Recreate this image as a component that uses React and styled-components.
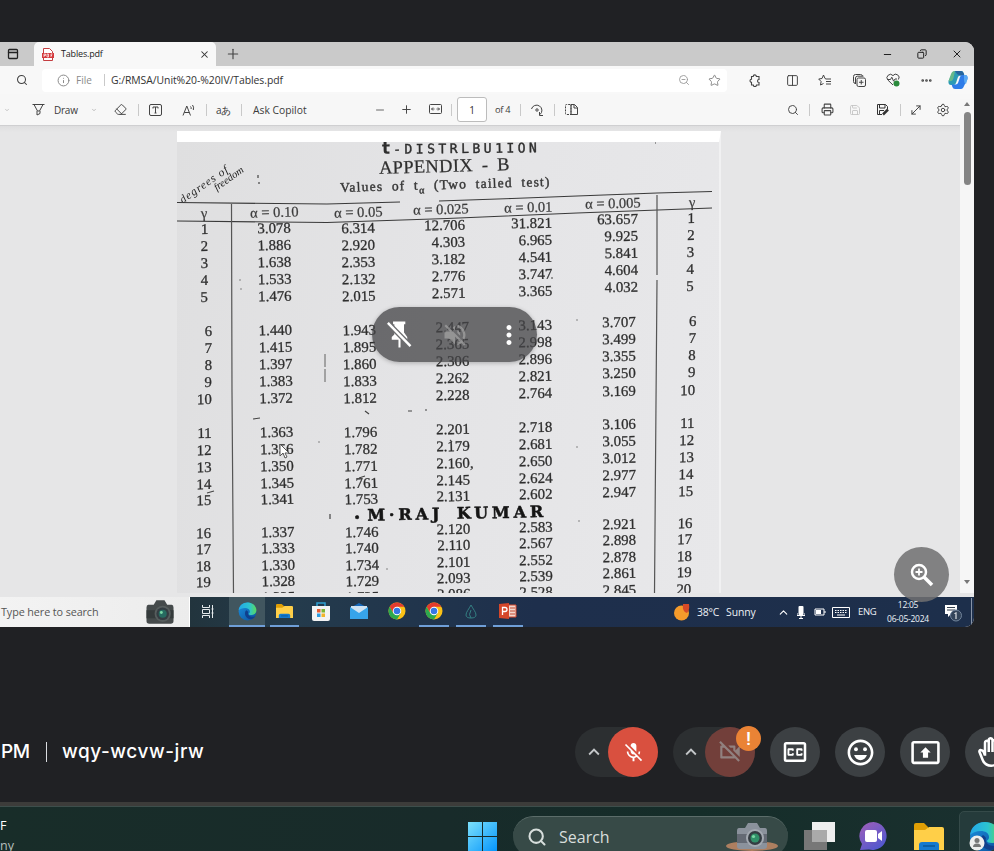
import React from "react";
import styled, { createGlobalStyle, css } from "styled-components";
import {
  Search, Star, Columns2, Printer, Save,
  MoveDiagonal, Settings, Eraser, Info, ZoomOut, Ellipsis, Minus, Plus,
  X, Copy, ChevronUp, ChevronDown, PanelTop,
} from "lucide-react";
import {
  MdMicOff, MdOutlineVideocamOff, MdOutlineClosedCaptionOff, MdOutlineEmojiEmotions,
  MdOutlinePresentToAll, MdOutlineBackHand, MdMoreVert, MdVolumeOff, MdKeyboardArrowUp,
} from "react-icons/md";

const Global = createGlobalStyle`
  * { box-sizing: border-box; }
  body { margin: 0; background: #202124; overflow: hidden; }
  svg { display: block; flex: none; }
`;

const UI = `"Open Sans", "Noto Sans", sans-serif`;

const Screen = styled.div`
  width: 994px; height: 851px; overflow: hidden;
  display: flex; flex-direction: column;
  background: #202124; font-family: ${UI};
`;

const Shared = styled.section`
  position: relative;
  margin-top: 42px; width: 974px; height: 585px; flex: none;
  display: flex; flex-direction: column;
  border-radius: 0 9px 9px 0; overflow: hidden; background: #e6e6e7;
`;

const bar = css`display: flex; align-items: center; flex: none;`;

const Slot = styled.div`
  display: flex; justify-content: center; align-items: center; flex: none;
  width: ${p => p.$w || 16}px; margin-left: ${p => p.$gap || 0}px;
  color: ${p => p.$color || "#444"};
`;

const Label = styled.span`
  flex: none; white-space: nowrap;
  width: ${p => p.$w}px; margin-left: ${p => p.$gap || 0}px;
  font-size: ${p => p.$size || 10}px; line-height: 14px; color: ${p => p.$color || "#3c3c3c"};
  letter-spacing: ${p => p.$track || 0}px;
`;

const Divider = styled.i`
  flex: none; width: 1px; height: ${p => p.$h || 12}px;
  margin-left: ${p => p.$gap}px; background: ${p => p.$color || "#c9c9c9"};
`;

const TabStrip = styled.div`${bar} height: 24px; padding-left: 5px; background: #cacaca;`;
const Tab = styled.div`
  ${bar} align-self: stretch; width: 182px; margin-left: 13px; padding-left: 6px;
  background: #f8f8f8; border-radius: 5px 5px 0 0;
`;
const WindowButtons = styled.div`${bar} margin-left: auto; padding-right: 9px; gap: 19px;`;

const AddressRow = styled.div`${bar} height: 28px; padding-left: 14px; background: #f8f8f8;`;
const Omnibox = styled.div`
  ${bar} width: 685px; height: 23px; margin-left: 12px; padding: 0 5px 0 13px;
  background: #fff; border-radius: 4px;
`;
const Grow = styled.div`flex: 1;`;

const Toolbar = styled.div`
  ${bar} height: 32px; background: #f7f7f7; border-bottom: 1px solid #cfcfd1;
`;
const PageInput = styled.div`
  flex: none; width: 30px; height: 25px; margin-left: 5px;
  display: flex; align-items: center; justify-content: center;
  border: 1px solid #bcbcbc; border-radius: 3px; background: #fff; font-size: 10px; color: #333;
`;

const Viewer = styled.div`
  display: flex; height: 429px; padding: 5px 0 0 177px; flex: none;
  background: linear-gradient(#dededf, #e6e6e7 6px);
`;
const Page = styled.article`
  width: 544px; height: 462px; border-top: 11px solid #fff; border-right: 2px solid #f1f1f2;
`;
const Scroll = styled.div`
  position: absolute; right: 0; top: 57px; width: 14px; height: 494px;
  display: flex; flex-direction: column; align-items: center; justify-content: space-between;
  background: #f6f6f6;
`;
const ScrollArrow = styled.i`
  border: 3px solid transparent; margin: 1px 0 3px;
  ${p => p.$down ? "border-top: 4px solid #777; border-bottom: 0; margin-bottom: 9px;" : "border-bottom: 4px solid #777; border-top: 0; margin-top: 3px;"}
`;
const Thumb = styled.i`width: 7px; height: 73px; border-radius: 4px; background: #858585; margin-bottom: auto; margin-top: 3px;`;

const Scan = styled.div`
  position: relative; width: 542px; height: 451px; overflow: hidden;
  background: linear-gradient(100deg, #dfdfe0, #e4e4e6 45%, #e8e8ea);
  font-family: "Liberation Serif", serif; color: #2e2e2e;
  filter: blur(0.35px);
`;
const Titles = styled.header`
  height: 50px; display: flex; flex-direction: column; align-items: center;
`;
const HandTitle = styled.div`
  height: 15px; white-space: nowrap; font: 700 17px/15px "DejaVu Sans", sans-serif;
  transform: rotate(-0.6deg) translateY(-1px); margin-left: 26px; margin-top: -1px;
  span { font: 500 13px/13px "DejaVu Sans Mono", "DejaVu Sans", monospace; letter-spacing: 3.5px; -webkit-text-stroke: 0.4px #2e2e2e; }
  b { letter-spacing: 3px; }
`;
const Appendix = styled.div`
  font-size: 18.5px; line-height: 20px; height: 20px; transform: rotate(-1.6deg); margin-left: -8px;
  letter-spacing: 0.3px; word-spacing: 4px; -webkit-text-stroke: 0.25px #333;
`;
const Caption = styled.div`
  font-size: 13.5px; line-height: 17px; transform: rotate(-1.6deg); margin-left: -6px; letter-spacing: 1.2px; word-spacing: 4px;
  white-space: nowrap; -webkit-text-stroke: 0.45px #444;
  sub { font-size: 10px; line-height: 0; }
`;
const Handwriting = styled.div`
  position: absolute; left: -1px; top: 30px; width: 82px;
  font: italic 11.5px/9px "Liberation Serif", serif; letter-spacing: 1px; color: #222;
  transform: rotate(-35deg);
  div + div { margin-left: 35px; font-size: 10.5px; letter-spacing: 0; }
`;
const Columns = styled.div`display: grid; grid-template-columns: 55px 84px 84px 88px 88px 82px 61px;`;
const Column = styled.div`
  display: flex; flex-direction: column; align-items: center;
  margin-top: ${p => p.$top}px; margin-left: ${p => p.$dx}px;
  transform: skewX(${p => p.$skew}deg); transform-origin: 50% 0;
`;
const Head = styled.div`
  height: 16px; line-height: 16px; font-size: 14.5px; white-space: nowrap;
  transform: rotate(-1.5deg) translateX(${p => p.$dx}px); color: #3c3c3c; -webkit-text-stroke: 0.25px #444;
`;
const Group = styled.div`
  display: grid; grid-auto-rows: ${p => p.$step}px; margin-bottom: ${p => p.$after}px;
  padding-left: ${p => p.$indent}px;
  text-align: ${p => p.$right ? "right" : "left"}; font-size: 14.8px; letter-spacing: 0.05px;
  -webkit-text-stroke: 0.3px #333;
`;
const Value = styled.div`
  transform: rotate(-1deg); line-height: 17px;
`;
const Watermark = styled.div`
  position: absolute; left: 177px; top: 363px; white-space: nowrap;
  font: 700 16px/17px "DejaVu Serif", serif; color: #151515;
  transform: rotate(-1.2deg); -webkit-text-stroke: 0.5px #151515;
  b { letter-spacing: 3.9px; word-spacing: 4px; }
  i { margin-right: 7px; font-style: normal; font-size: 10px; }
`;
const Overlay = styled.svg`position: absolute; left: 0; top: 0;`;

const Taskbar = styled.div`
  ${bar} height: 30px; margin-top: auto; background: linear-gradient(90deg, #22343d 190px, #243b4c 30%, #1e2f4c 55%, #1d2f4b);
`;
const TaskSearch = styled.div`
  ${bar} width: 190px; height: 30px; background: linear-gradient(90deg, #f3f3f3, #ececec); border-right: 1px solid #fff;
`;
const TaskApp = styled.div`
  width: ${p => p.$w || 28}px; height: 30px; flex: none; margin-left: ${p => p.$gap}px;
  display: flex; justify-content: center; align-items: center;
  background: ${p => p.$active ? "#41565f" : "transparent"};
  border-bottom: 2px solid ${p => p.$on ? "#6f9fd8" : "transparent"};
`;
const Clock = styled.div`
  width: 46px; margin-left: 9px; margin-top: -1px; text-align: center; font-size: 8.5px; line-height: 14px;
  letter-spacing: -0.25px; color: #eef2f7; white-space: nowrap; position: relative; z-index: 1;
`;

const Pill = styled.div`
  position: absolute; left: 372px; top: 265px; width: 165px; height: 55px; border-radius: 28px;
  display: flex; align-items: center; justify-content: space-between; padding: 0 13px 0 12px;
  background: rgba(68, 69, 71, 0.76); color: #fff; box-shadow: 0 1px 4px rgba(0,0,0,.25);
`;
const Dim = styled.span`color: #aaa; opacity: 0.65;`;
const ZoomButton = styled.div`
  position: absolute; left: 894px; top: 505px; width: 55px; height: 55px; border-radius: 50%;
  display: flex; align-items: center; justify-content: center;
  background: rgba(112, 112, 113, 0.86);
`;
const Cursor = styled.svg`position: absolute; left: 279px; top: 401px;`;

const MeetBar = styled.footer`
  ${bar} height: 50px; margin-top: 100px; color: #fff;
`;
const MeetText = styled.span`
  flex: none; font: 500 19px/24px "Inter", sans-serif; white-space: nowrap; width: ${p => p.$w}px;
  margin-left: ${p => p.$gap}px; letter-spacing: ${p => p.$track}px;
`;
const MeetRule = styled.i`flex: none; width: 1px; height: 20px; margin-left: 16px; background: #dadce0;`;
const SplitControl = styled.div`
  position: relative; flex: none; width: ${p => p.$w}px; height: 50px; margin-left: ${p => p.$gap}px;
  display: flex; align-items: center; justify-content: flex-end; border-radius: 25px; background: #2c2f31;
`;
const Chevron = styled.span`margin-right: 3px; color: #c4c7c9;`;
const Round = styled.div`
  width: 50px; height: 50px; flex: none; border-radius: 50%; margin-left: ${p => p.$gap || 0}px;
  display: flex; align-items: center; justify-content: center;
  background: ${p => p.$bg || "#3c4043"}; color: ${p => p.$color || "#fff"};
`;
const Badge = styled.div`
  position: absolute; right: -6px; top: -1px; width: 25px; height: 25px; border-radius: 50%;
  display: flex; align-items: center; justify-content: center;
  background: #ea8335; font: 500 19px/25px Roboto, sans-serif; color: #fff;
`;

const HostBar = styled.div`
  height: 49px; margin-top: auto; display: flex; flex: none; align-items: flex-start;
  border-top: 4px solid #3c3c3a; background: linear-gradient(90deg, #182d29, #182b2a 45%, #152d29 70%, #1a302f);
  box-shadow: inset 0 1px #3d4e4b;
`;
const Weather = styled.div`
  flex: none; width: 20px; margin-top: 10px; font-size: 12.5px; line-height: 20px; color: #fff;
  div + div { color: #b4bfbc; }
`;
const HostSlot = styled.div`margin: ${p => p.$top}px 0 0 ${p => p.$gap}px; flex: none;`;
const HostSearch = styled.div`
  ${bar} width: 275px; height: 41px; margin: 10px 0 0 16px; padding: 0 10px 0 14px; border-radius: 21px;
  background: #374a47; border-top: 1px solid #5c6d6a; color: #d7dedc; font-size: 16px;
  span { margin-left: 12px; flex: 1; letter-spacing: 0; }
`;
const ActiveApp = styled.div`
  width: 60px; height: 44px; margin: 5px 0 0 15px; padding: 9px 0 0 9px; flex: none;
  border: 1px solid #354a49; border-radius: 5px; background: #253b3b;
`;

const columns = [
  { head: "γ", top: 13, dx: 1, hdx: -1, skew: -0.3, rows: 4 },
  { head: "α = 0.10", top: 12, dx: 0, hdx: 0, skew: 0.7, v: ["3.078 1.886 1.638 1.533 1.476", "1.440 1.415 1.397 1.383 1.372", "1.363 1.356 1.350 1.345 1.341", "1.337 1.333 1.330 1.328 1.325"] },
  { head: "α = 0.05", top: 12, dx: 0, hdx: 0, skew: 0.7, v: ["6.314 2.920 2.353 2.132 2.015", "1.943 1.895 1.860 1.833 1.812", "1.796 1.782 1.771 1.761 1.753", "1.746 1.740 1.734 1.729 1.725"] },
  { head: "α = 0.025", top: 9, dx: 1, hdx: -4, skew: 0.3, indent: 14, v: ["12.706 4.303 3.182 2.776 2.571", "2.447 2.365 2.306 2.262 2.228", "2.201 2.179 2.160, 2.145 2.131", "2.120 2.110 2.101 2.093 2.086"] },
  { head: "α = 0.01", top: 7, dx: -2, hdx: -3, skew: 0.2, indent: 7, v: ["31.821 6.965 4.541 3.747 3.365", "3.143 2.998 2.896 2.821 2.764", "2.718 2.681 2.650 2.624 2.602", "2.583 2.567 2.552 2.539 2.528"] },
  { head: "α = 0.005", top: 3, dx: 0, hdx: -4, skew: 0.1, indent: 3, v: ["63.657 9.925 5.841 4.604 4.032", "3.707 3.499 3.355 3.250 3.169", "3.106 3.055 3.012 2.977 2.947", "2.921 2.898 2.878 2.861 2.845"] },
  { head: "γ", top: 2, dx: 6, hdx: 1, skew: -1.1, rows: 5 },
];
const ordinals = ["1 2 3 4 5", "6 7 8 9 10", "11 12 13 14 15", "16 17 18 19 20"];
const leftShape = [[17, 16.5], [17.2, 17], [16.75, 16], [16.2, 0]];
const rightShape = [[17, 17.5], [17.3, 16.5], [16.8, 15.5], [16.4, 0]];

function TableColumn({ col }) {
  const groups = (col.v || ordinals).map(s => s.split(" "));
  if (col.rows === 4) groups[3].pop();
  const shape = col.rows === 5 || col.head === "α = 0.005" ? rightShape : leftShape;
  return (
    <Column $top={col.top} $dx={col.dx} $skew={col.skew}>
      <Head $dx={col.hdx}>{col.head}</Head>
      {groups.map((g, i) => {
        const trailing = g.some(n => n.endsWith(","));
        return (
          <Group key={i} $step={shape[i][0]} $after={shape[i][1]} $right={!trailing}
            $indent={i && col.indent ? col.indent + (trailing ? 4 : 0) : 0}>
            {g.map(n => <Value key={n}>{n}</Value>)}
          </Group>
        );
      })}
    </Column>
  );
}

const EdgeLogo = ({ size }) => (
  <svg width={size} height={size} viewBox="0 0 32 32">
    <defs>
      <linearGradient id="eg" x1="0" x2="1" y1=".3" y2=".3"><stop offset="0" stopColor="#23a7e8" /><stop offset=".6" stopColor="#2cc4d0" /><stop offset="1" stopColor="#5bd85a" /></linearGradient>
      <linearGradient id="eb" x1="0" x2="1" y1="0" y2="1"><stop offset="0" stopColor="#1a90df" /><stop offset="1" stopColor="#0b4f9c" /></linearGradient>
    </defs>
    <circle cx="16" cy="16" r="15" fill="url(#eb)" />
    <path d="M1 14C2 6 8 1 16 1c9 0 15 6 15 13 0 5-4 8-8 8-3 0-5-1-5-2 0-1 2-1 2-4 0-4-4-6-8-6C7 10 3 12 1 14z" fill="url(#eg)" />
    <path d="M14 14c-4 3-3 14 7 15 4 0 7-3 8-5-6 3-14-1-12-7 0 0-1-2-3-3z" fill="#103f8c" />
  </svg>
);
const ChromeLogo = () => (
  <svg width="18" height="18" viewBox="0 0 36 36">
    <circle cx="18" cy="18" r="17" fill="#fbc116" />
    <path d="M3.3 9.5A17 17 0 0 1 32.7 9.5L18 9.5 10.6 22.3z" fill="#e33b2e" />
    <path d="M3.3 9.5A17 17 0 0 0 18 35L25.4 22.3H10.6z" fill="#2da94f" />
    <circle cx="18" cy="18" r="8.5" fill="#fff" /><circle cx="18" cy="18" r="6.6" fill="#3577e5" />
  </svg>
);
const Folder = ({ w, h }) => (
  <svg width={w} height={h} viewBox="0 0 30 27" preserveAspectRatio="none">
    <path d="M0 2a2 2 0 0 1 2-2h8l4 4v5H0z" fill="#e09f05" />
    <path d="M0 7h11l4-3h13a2 2 0 0 1 2 2v21H0z" fill="#ffcf48" />
    <path d="M5 27v-5a3 3 0 0 1 3-3h14a3 3 0 0 1 3 3v5z" fill="#1479cf" /><path d="M9 23h12" stroke="#07518f" strokeWidth="1.3" />
  </svg>
);
const CameraIcon = ({ w, h, table }) => (
  <svg width={w} height={h} viewBox={table ? "0 0 52 30" : "6 0 40 28"}>
    {table && <ellipse cx="26" cy="24" rx="26" ry="5" fill="#ad7f60" />}
    <path d="M13 6h6l3-5h9l3 5h5q2 0 2 3v15q0 3-3 3H14q-3 0-3-3V9q0-3 2-3z" fill={table ? "#8b929c" : "#454a4b"} />
    <path d="M11 12h30v9H11z" fill={table ? "#646a74" : "#343a3b"} />
    <circle cx="29" cy="16" r="9" fill={table ? "#a3a9b1" : "#565d5d"} /><circle cx="29" cy="16" r="7" fill="#343c42" />
    <circle cx="29" cy="16" r="4.5" fill={table ? "#319069" : "#266b61"} /><circle cx="27.5" cy="14.5" r="1.6" fill="#79d8a5" />
  </svg>
);

const thin = { size: 13, strokeWidth: 1.8 };

function Browser() {
  return (
    <>
      <TabStrip>
        <Slot><PanelTop size={12} strokeWidth={2.6} color="#222" /></Slot>
        <Tab>
          <Slot>
            <svg width="12" height="13" viewBox="0 0 12 13"><path d="M1.5 .5h6l3 3v9h-9z" fill="#fff" stroke="#c43d40" /><path d="M0 5h12v5H0z" fill="#d5393d" /><path d="M2 6v3M2 6h1.5v1.5H2M5 6v3h1.5V6zM9 9V6h1.5M9 7.5h1" stroke="#fff" strokeWidth=".7" fill="none" /></svg>
          </Slot>
          <Label $gap={5} $w={126} $size={9} $track={-0.18} $color="#222">Tables.pdf</Label>
          <Slot $gap={9} $color="#333"><X size={11} strokeWidth={2.2} /></Slot>
        </Tab>
        <Slot $gap={9}><Plus size={16} strokeWidth={1.7} /></Slot>
        <WindowButtons>
          <Slot><Minus size={11} strokeWidth={2.2} color="#222" /></Slot>
          <Slot><Copy size={10} strokeWidth={2.4} color="#222" transform="scale(-1 1)" /></Slot>
          <Slot><X size={12} strokeWidth={2} color="#222" /></Slot>
        </WindowButtons>
      </TabStrip>
      <AddressRow>
        <Slot><Search size={12} strokeWidth={2.1} /></Slot>
        <Omnibox>
          <Slot $color="#888"><Info {...thin} /></Slot>
          <Label $gap={5} $w={22} $size={10} $color="#8a8a8a">File</Label>
          <Divider $gap={6} /><Label $gap={6} $w={180} $size={10.4} $color="#333" $track={-0.05}>G:/RMSA/Unit%20-%20IV/Tables.pdf</Label>
          <Grow />
          <Slot $color="#999"><ZoomOut size={12} strokeWidth={1.8} /></Slot>
          <Slot $gap={14} $color="#888"><Star {...thin} /></Slot>
        </Omnibox>
        <Slot $gap={20}>
          <svg width="13" height="13" viewBox="0 0 13 13" fill="none" stroke="#444" strokeWidth="1.1"><path d="M2.500 2.500H4.200a1.600 1.600 0 0 1 3.200 0H10v3a1.500 1.500 0 1 0 0 3v2.500H7.500a1.600 1.600 0 0 1-3.200 0H2.500V8.300a1.500 1.500 0 0 1 0-3z" /></svg>
        </Slot>
        <Slot $gap={21}><Columns2 {...thin} /></Slot>
        <Slot $gap={17}>
          <svg width="14" height="13" viewBox="0 0 14 13" fill="none" stroke="#444" strokeWidth="1"><path d="M8 5 L7 4.5 5.5 1 4 4.5.7 5l2.4 2.5L2.5 11l3-1.5M8 5h5M8 7.5h5M8 10h5" /></svg>
        </Slot>
        <Slot $gap={18}>
          <svg width="13" height="13" viewBox="0 0 13 13" fill="none" stroke="#444"><rect x="4" y="4" width="8.500" height="8.500" rx="1.500" /><path d="M8.250 6v4.500M6 8.250h4.500M2.500 9.500A2 2 0 0 1 .500 7.500V2.500a2 2 0 0 1 2-2h5a2 2 0 0 1 2 1.500M2.500 10V4a2 2 0 0 1 2-1.800h6" /></svg>
        </Slot>
        <Slot $gap={18}>
          <svg width="14" height="14" viewBox="0 0 14 14" fill="none" stroke="#444" strokeWidth="1"><path d="M7 12 1.8 7A3.2 3.2 0 0 1 7 2.6 3.2 3.2 0 0 1 12.4 6.5M2 6.5h2.5l1.3-2.3 1.8 4L9 6h2" /><circle cx="10.5" cy="10.5" r="3" fill="#2b8a3c" stroke="none" /></svg>
        </Slot>
        <Slot $gap={17}><Ellipsis size={13} strokeWidth={3} /></Slot>
        <Slot $gap={15} $w={18}>
          <svg width="20" height="18" viewBox="0 0 20 18">
            <path d="M5 1Q6 0 7 0h6q2 0 2.600 2l.8 2.500h-4q-2 0-2.600 2L8 12q-.7 2-2.500 2H3q-3 0-2.500-4z" fill="#2b9bb5" />
            <path d="M7 0h6q2 0 2.600 2l.8 2.500h-4Q9 4 7 0z" fill="#27659f" /><path d="M.500 10 3 3q1-3 4-3L5.500 7q-1 4-5 3z" fill="#65b98b" />
            <path d="M15 17q-1 1-2 1H7q-2 0-2.600-2l-.8-2.500h4q2 0 2.600-2L12 6q.7-2 2.500-2H17q3 0 2.500 4z" fill="#2f7ce8" /><path d="M16 4h1q3 0 2.500 4l-1.500 5q-2-1-2-4z" fill="#5aaaf3" />
          </svg>
        </Slot>
      </AddressRow>
      <Toolbar>
        <Slot $gap={2} $w={10} $color="#999"><ChevronDown size={6} /></Slot>
        <Slot $gap={18}><svg width="13" height="13" viewBox="0 0 13 13" fill="none" stroke="#444"><path d="M.5 1.500h12M2 1.500l3.500 6.500h2L11 1.500M5 8v4l3-1.5V8" /></svg></Slot>
        <Label $gap={8} $w={26} $size={10} $track={-0.25}>Draw</Label>
        <Slot $gap={9} $w={10} $color="#888"><ChevronDown size={6} /></Slot>
        <Slot $gap={13}><Eraser {...thin} /></Slot>
        <Divider $gap={10} />
        <Slot $gap={8}><svg width="13" height="12" viewBox="0 0 13 12" fill="none" stroke="#444"><rect x=".5" y=".5" width="12" height="11" rx="1.5" /><path d="M4 4.500V3h5v1.500M6.500 3v6M5.500 9h2" /></svg></Slot>
        <Slot $gap={18}><svg width="14" height="12" viewBox="0 0 14 12" fill="none" stroke="#444"><path d="M1 11.500 4.800 2l3.700 9.500M2.300 8.500h5M8.500 2.500q1 1 .6 2.500M10.500 1q1.700 2 .8 5" /></svg></Slot>
        <Divider $gap={9} />
        <Label $gap={9} $w={16} $size={10} $track={-0.5}>aあ</Label>
        <Divider $gap={9} />
        <Label $gap={11} $w={60} $size={10.3} $track={0}>Ask Copilot</Label>
        <Slot $gap={59}><Minus size={12} strokeWidth={1.6} /></Slot>
        <Slot $gap={10}><Plus size={13} strokeWidth={1.8} /></Slot>
        <Slot $gap={13}><svg width="13" height="11" viewBox="0 0 13 11" fill="none" stroke="#444"><rect x=".5" y=".5" width="12" height="9" rx="1" /><path d="M2.500 5h3M4 3.500 2.500 5 4 6.500M10.500 5h-3M9 3.500 10.500 5 9 6.500" strokeWidth=".9" /></svg></Slot>
        <Divider $gap={8} />
        <PageInput>1</PageInput>
        <Label $gap={8} $w={18} $size={9.3} $track={-0.3}>of 4</Label>
        <Divider $gap={7} />
        <Slot $gap={8}><svg width="14" height="14" viewBox="0 0 14 14" fill="none" stroke="#444"><path d="M1.500 6A5.300 5.300 0 1 1 10 11.500M9.500 9v3.500H13" /><circle cx="7" cy="7" r="1.200" /></svg></Slot>
        <Divider $gap={9} />
        <Slot $gap={8}><svg width="13" height="11" viewBox="0 0 13 11" fill="none" stroke="#444"><path d="M6 .500v10H1.500q-1 0-1-1v-8q0-1 1-1z" strokeDasharray="2 1" /><path d="M6 .500h3.500l3 3v7H6zM9 .500V4h3.500" /></svg></Slot>
        <Slot $gap={206}><Search size={12} strokeWidth={1.9} /></Slot>
        <Divider $gap={8} />
        <Slot $gap={9}><Printer {...thin} strokeWidth={2} /></Slot>
        <Slot $gap={12} $color="#c4c4c4"><Save size={12} strokeWidth={1.8} /></Slot>
        <Slot $gap={11}><svg width="13" height="13" viewBox="0 0 13 13" fill="none" stroke="#333"><path d="M6 11.500H1.500v-10h8l2 2V6M3.500 1.500V5H9V1.500M3.500 11V7.500H8" /><path d="m12 6.500-5 5" strokeWidth="2.500" /></svg></Slot>
        <Divider $gap={10} />
        <Slot $gap={7}><MoveDiagonal size={14} strokeWidth={1.7} /></Slot>
        <Slot $gap={11}><Settings size={14} strokeWidth={1.7} /></Slot>
      </Toolbar>
    </>
  );
}

function ScannedPage() {
  return (
    <Scan>
      <Titles>
        <HandTitle><b>t</b><span>-DISTRLBU1ION</span></HandTitle>
        <Appendix>APPENDIX - B</Appendix>
        <Caption>Values of t<sub>α</sub> (Two tailed test)</Caption>
      </Titles>
      <Handwriting><div>degrees of</div><div>freedom</div></Handwriting>
      <Columns>{columns.map((c, i) => <TableColumn key={i} col={c} />)}</Columns>
      <Watermark><i>•</i><b>M·RAJ KUMAR</b></Watermark>
      <Overlay width="542" height="451" viewBox="0 0 542 451" fill="none" stroke="#3a3a3a" strokeWidth="1.2">
        <path d="M0 60.500 150 62 223 60M262 59 335 56.500 400 54 480 51 535 49.500M0 79 150 80.500 270 76.500 400 71 535 66" />
        <path d="M54.500 62 55 250 56.500 451M480 53v80M480 138l-1 122-1.500 191" stroke="#555" />
        <path d="M148 212v30" stroke="#777" strokeDasharray="13 2" />
        <path d="M76 277l7-1M182 336l6-2M30 351l7-2M81 33v3M82 40v2M188 269l4 3M231 269h4M153 372v5M478 1h1M273 298l2 2" stroke="#444" />
        <g fill="#777" stroke="none"><circle cx="63" cy="138" r=".8" /><circle cx="64" cy="147" r=".8" /><circle cx="142" cy="300" r=".8" /><circle cx="400" cy="178" r=".8" /><circle cx="400" cy="305" r=".8" /><circle cx="402" cy="379" r=".8" /><circle cx="375" cy="136" r="1" /><circle cx="249" cy="268" r="1" /><circle cx="210" cy="427" r=".8" /></g>
      </Overlay>
    </Scan>
  );
}

function SharedTaskbar() {
  return (
    <Taskbar>
      <TaskSearch>
        <Label $gap={1} $w={141} $size={10.8} $color="#555" $track={-0.1}>Type here to search</Label>
        <CameraIcon w={36} h={26} />
      </TaskSearch>
      <TaskApp $gap={4}><svg width="14" height="13" viewBox="0 0 14 13" fill="none" stroke="#e5eaec"><path d="M1.500 0v2.500h7V0M1.500 4.500h7v4h-7zM1.500 13v-2.500h7V13M11.500 0v13M10.500 4h2M10.500 8h2" /></svg></TaskApp>
      <TaskApp $gap={7} $w={36} $active $on><EdgeLogo size={19} /></TaskApp>
      <TaskApp $gap={5} $w={29} $on><Folder w={17} h={14} /></TaskApp>
      <TaskApp $gap={8}><svg width="18" height="19" viewBox="0 0 18 19"><path d="M5 5V1h8v4" fill="none" stroke="#2f9fd0" strokeWidth="1.500" /><path d="M0 4h18v13q0 2-2 2H2q-2 0-2-2z" fill="#f3f3f3" /><path d="M5 7h3.500v3.500H5z" fill="#e65a30" /><path d="M9.500 7H13v3.500H9.500z" fill="#7cb534" /><path d="M5 11.500h3.500V15H5z" fill="#2d9de0" /><path d="M9.500 11.500H13V15H9.500z" fill="#f2b52a" /></svg></TaskApp>
      <TaskApp $gap={10}><svg width="18" height="16" viewBox="0 0 18 16"><path d="M0 5 9 0l9 5v11H0z" fill="#1769ba" /><path d="M1 3h16v7H1z" fill="#cfe3f3" /><path d="m0 4 9 6 9-6v12H0z" fill="#37a4ea" /></svg></TaskApp>
      <TaskApp $gap={10}><ChromeLogo /></TaskApp>
      <TaskApp $gap={8} $w={30} $on><ChromeLogo /></TaskApp>
      <TaskApp $gap={7} $w={30} $on><svg width="12" height="15" viewBox="0 0 12 15" fill="none" stroke="#348083"><path d="M6 1C4 5 1 8 1 11q0 3 5 3t5-3C11 8 8 5 6 1zM6 6q-3 5 0 8" /></svg></TaskApp>
      <TaskApp $gap={7} $w={30} $on><svg width="18" height="16" viewBox="0 0 18 16"><path d="M8 2h9v12H8z" fill="#f3d6cd" stroke="#d5492c" /><path d="M11 5h5M11 8h5M11 11h5" stroke="#c14b30" /><path d="M0 1 10 0v16L0 15z" fill="#d5472a" /><path d="M3.500 12V4.500H6q2 0 2 2t-2 2H3.500" stroke="#fff" fill="none" strokeWidth="1.300" /></svg></TaskApp>
      <Grow />
      <Slot $w={18}><svg width="18" height="18" viewBox="0 0 18 18"><circle cx="8.500" cy="10" r="7.500" fill="#f59b2b" /><path d="M10 1h6q1 6-2 9-5-1-4-9z" fill="#d64a27" /></svg></Slot>
      <Label $gap={6} $w={29} $size={10.4} $color="#edf1f6" $track={-0.2}>38°C</Label>
      <Label $w={34} $size={10.4} $color="#edf1f6" $track={-0.05}>Sunny</Label>
      <Slot $gap={15} $color="#fff"><ChevronUp size={13} /></Slot>
      <Slot $gap={2} $color="#fff"><svg width="8" height="13" viewBox="0 0 8 13"><rect x="1.500" width="5" height="9" rx="1" fill="#fff" /><path d="M0 7v2.500h8V7M4 9v3M2 12.500h4" fill="none" stroke="#fff" /></svg></Slot>
      <Slot $gap={3} $color="#fff"><svg width="12" height="8" viewBox="0 0 12 8"><path d="M1 1h9v6H1zM11 3v2" stroke="#fff" fill="none" /><path d="M2 2h5v4H2z" fill="#fff" /></svg></Slot>
      <Slot $gap={4} $w={18} $color="#fff"><svg width="18" height="11" viewBox="0 0 18 11" fill="none" stroke="#fff"><path d="M.500.500h17v10H.500z" /><path d="M3 3.500h12M3 5.500h12" strokeDasharray="1.500 1" /><path d="M5 8h8" /></svg></Slot>
      <Label $gap={8} $w={18} $size={9.5} $color="#edf1f6" $track={-0.4}>ENG</Label>
      <Clock>12:05<br />06-05-2024</Clock>
      <Slot $gap={13} $w={18}><svg width="18" height="19" viewBox="0 0 18 19"><path d="M1 2h12v9H7l-3 3v-3H1z" fill="#fff" /><path d="M3 4.500h8M3 7h8" stroke="#333f4d" /><circle cx="12" cy="12.500" r="5.500" fill="#33445a" stroke="#70839b" /><path d="m10.500 11 1.500-1.500v6.500" stroke="#fff" fill="none" /></svg></Slot>
      <Divider $h={28} $gap={9} $color="#8793a6" /><Slot $w={2} />
    </Taskbar>
  );
}

export default function App() {
  return (
    <>
      <Global />
      <Screen>
        <Shared>
          <Browser />
          <Viewer><Page><ScannedPage /></Page></Viewer>
          <Scroll><ScrollArrow /><Thumb /><ScrollArrow $down /></Scroll>
          <SharedTaskbar />
          <Pill>
            <svg width="31" height="31" viewBox="0 0 24 24"><path d="M15.500 10.500V4h1V2H7v2h1v8l-2 2v2h5.200v6h1.600v-6H18v-2z" fill="#fff" /><path d="m2.500 2.500 18 18.500" stroke="#6d6e70" strokeWidth="4" /><path d="m3 3 17.500 18" stroke="#fff" strokeWidth="1.900" /></svg>
            <Dim><MdVolumeOff size={28} /></Dim>
            <MdMoreVert size={30} />
          </Pill>
          <ZoomButton>
            <svg width="24" height="24" viewBox="0 0 24 24" fill="none" stroke="#fff"><circle cx="9" cy="9" r="7" strokeWidth="2.500" /><path d="m14 14 8 8" strokeWidth="3.600" /><path d="M9 5.500v7M5.500 9h7" strokeWidth="1.800" /></svg>
          </ZoomButton>
          <Cursor width="11" height="17" viewBox="0 0 11 17"><path d="M1 1v12l3-3 2 5 2-1-2-4h4z" fill="#fff" stroke="#555" /></Cursor>
        </Shared>
        <MeetBar>
          <MeetText $w={29} $gap={1} $track={-0.4}>PM</MeetText>
          <MeetRule />
          <MeetText $w={150} $gap={15} $track={0.55}>wqy-wcvw-jrw</MeetText>
          <SplitControl $w={83} $gap={363}>
            <Chevron><MdKeyboardArrowUp size={22} /></Chevron>
            <Round $bg="#d9503f"><MdMicOff size={23} /></Round>
          </SplitControl>
          <SplitControl $w={82} $gap={15}>
            <Chevron><MdKeyboardArrowUp size={22} /></Chevron>
            <Round $bg="#723f3a" $color="#91817f"><MdOutlineVideocamOff size={26} /></Round>
            <Badge>!</Badge>
          </SplitControl>
          <Round $gap={15}><MdOutlineClosedCaptionOff size={30} /></Round>
          <Round $gap={15}><MdOutlineEmojiEmotions size={31} /></Round>
          <Round $gap={15}><MdOutlinePresentToAll size={31} /></Round>
          <Round $gap={15}><MdOutlineBackHand size={30} /></Round>
        </MeetBar>
        <HostBar>
          <Weather><div>F</div><div>ny</div></Weather>
          <HostSlot $gap={448} $top={16}>
            <svg width="29" height="29" viewBox="0 0 29 29"><defs><linearGradient id="wl" x2="1" y2="1"><stop stopColor="#7ce0fb" /><stop offset="1" stopColor="#0595fb" /></linearGradient></defs><path d="M0 0h14v14H0zM15 0h14v14H15zM0 15h14v14H0zM15 15h14v14H15z" fill="url(#wl)" /></svg>
          </HostSlot>
          <HostSearch><Search size={20} strokeWidth={2.5} /><span>Search</span><CameraIcon w={52} h={30} table /></HostSearch>
          <HostSlot $gap={16} $top={15}>
            <svg width="31" height="30" viewBox="0 0 31 30"><path d="M8 1h23v20H8z" fill="#eee" /><path d="M0 9h23v20H0z" fill="#777" /><path d="M8 9h15v12H8z" fill="#aaa" /></svg>
          </HostSlot>
          <HostSlot $gap={24} $top={16}>
            <svg width="29" height="29" viewBox="0 0 29 29"><defs><linearGradient id="tc" x2=".7" y2="1"><stop stopColor="#a15fb8" /><stop offset="1" stopColor="#5058cf" /></linearGradient></defs><path d="M14.500 0A14 14 0 1 1 10 27.500L1 28l2-6A14 14 0 0 1 14.500 0z" fill="url(#tc)" /><rect x="6" y="8" width="12" height="12" rx="2" fill="#fff" /><path d="m19 12 4-3v10l-4-3z" fill="#fff" /></svg>
          </HostSlot>
          <HostSlot $gap={26} $top={17}><Folder w={30} h={27} /></HostSlot>
          <ActiveApp>
            <svg width="32" height="32" viewBox="0 0 32 32"><EdgeLogo size={32} /><circle cx="8" cy="22" r="7.500" fill="#eee" /><circle cx="8" cy="19.500" r="2.500" fill="#777" /><path d="M4 26q0-3.500 4-3.500t4 3.500z" fill="#777" /></svg>
          </ActiveApp>
        </HostBar>
      </Screen>
    </>
  );
}
